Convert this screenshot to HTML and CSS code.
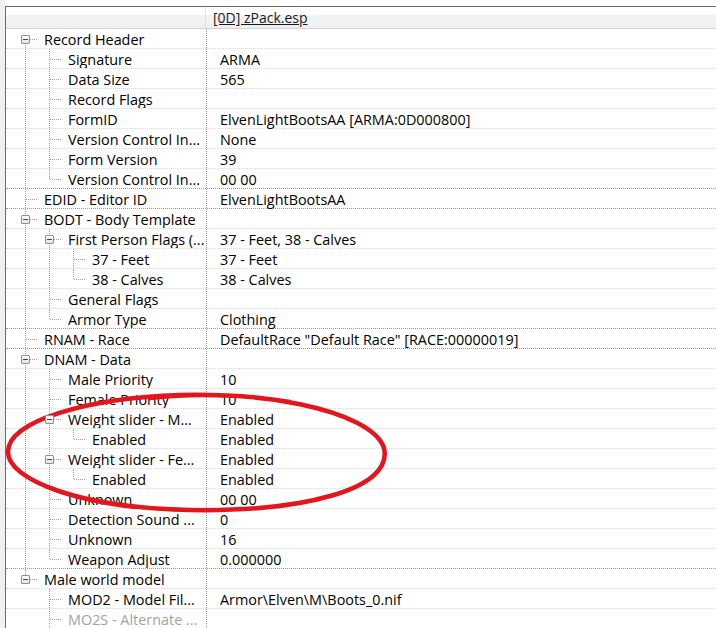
FILE: index.html
```html
<!DOCTYPE html>
<html lang="en">
<head>
    <meta charset="UTF-8">
    <title>zPack.esp - ARMA</title>
    <link rel="stylesheet" href="styles.css">
</head>
<body>
    <div class="frame">
        <div class="view">
            <div class="header">
                <div class="hname"></div>
                <div class="hval"><u>[0D] zPack.esp</u></div>
            </div>

            <div class="row">
                <div class="name"><span class="j first"><i class="box"></i></span><span class="label">Record Header</span></div>
                <div class="val"></div>
            </div>
            <div class="row">
                <div class="name"><span class="g line"></span><span class="j"></span><span class="label">Signature</span></div>
                <div class="val">ARMA</div>
            </div>
            <div class="row">
                <div class="name"><span class="g line"></span><span class="j"></span><span class="label">Data Size</span></div>
                <div class="val">565</div>
            </div>
            <div class="row">
                <div class="name"><span class="g line"></span><span class="j"></span><span class="label">Record Flags</span></div>
                <div class="val"></div>
            </div>
            <div class="row">
                <div class="name"><span class="g line"></span><span class="j"></span><span class="label">FormID</span></div>
                <div class="val">ElvenLightBootsAA [ARMA:0D000800]</div>
            </div>
            <div class="row">
                <div class="name"><span class="g line"></span><span class="j"></span><span class="label">Version Control In...</span></div>
                <div class="val">None</div>
            </div>
            <div class="row">
                <div class="name"><span class="g line"></span><span class="j"></span><span class="label">Form Version</span></div>
                <div class="val">39</div>
            </div>
            <div class="row group-end">
                <div class="name"><span class="g line"></span><span class="j last"></span><span class="label">Version Control In...</span></div>
                <div class="val">00 00</div>
            </div>

            <div class="row group-end">
                <div class="name"><span class="j"></span><span class="label">EDID - Editor ID</span></div>
                <div class="val">ElvenLightBootsAA</div>
            </div>

            <div class="row">
                <div class="name"><span class="j"><i class="box"></i></span><span class="label">BODT - Body Template</span></div>
                <div class="val"></div>
            </div>
            <div class="row">
                <div class="name"><span class="g line"></span><span class="j"><i class="box"></i></span><span class="label">First Person Flags (...</span></div>
                <div class="val">37 - Feet, 38 - Calves</div>
            </div>
            <div class="row">
                <div class="name"><span class="g line"></span><span class="g line"></span><span class="j"></span><span class="label">37 - Feet</span></div>
                <div class="val">37 - Feet</div>
            </div>
            <div class="row">
                <div class="name"><span class="g line"></span><span class="g line"></span><span class="j last"></span><span class="label">38 - Calves</span></div>
                <div class="val">38 - Calves</div>
            </div>
            <div class="row">
                <div class="name"><span class="g line"></span><span class="j"></span><span class="label">General Flags</span></div>
                <div class="val"></div>
            </div>
            <div class="row group-end">
                <div class="name"><span class="g line"></span><span class="j last"></span><span class="label">Armor Type</span></div>
                <div class="val">Clothing</div>
            </div>

            <div class="row group-end">
                <div class="name"><span class="j"></span><span class="label">RNAM - Race</span></div>
                <div class="val">DefaultRace "Default Race" [RACE:00000019]</div>
            </div>

            <div class="row">
                <div class="name"><span class="j"><i class="box"></i></span><span class="label">DNAM - Data</span></div>
                <div class="val"></div>
            </div>
            <div class="row">
                <div class="name"><span class="g line"></span><span class="j"></span><span class="label">Male Priority</span></div>
                <div class="val">10</div>
            </div>
            <div class="row">
                <div class="name"><span class="g line"></span><span class="j"></span><span class="label">Female Priority</span></div>
                <div class="val">10</div>
            </div>
            <div class="row">
                <div class="name"><span class="g line"></span><span class="j"><i class="box"></i></span><span class="label">Weight slider - M...</span></div>
                <div class="val">Enabled</div>
            </div>
            <div class="row">
                <div class="name"><span class="g line"></span><span class="g line"></span><span class="j last"></span><span class="label">Enabled</span></div>
                <div class="val">Enabled</div>
            </div>
            <div class="row">
                <div class="name"><span class="g line"></span><span class="j"><i class="box"></i></span><span class="label">Weight slider - Fe...</span></div>
                <div class="val">Enabled</div>
            </div>
            <div class="row">
                <div class="name"><span class="g line"></span><span class="g line"></span><span class="j last"></span><span class="label">Enabled</span></div>
                <div class="val">Enabled</div>
            </div>
            <div class="row">
                <div class="name"><span class="g line"></span><span class="j"></span><span class="label">Unknown</span></div>
                <div class="val">00 00</div>
            </div>
            <div class="row">
                <div class="name"><span class="g line"></span><span class="j"></span><span class="label">Detection Sound ...</span></div>
                <div class="val">0</div>
            </div>
            <div class="row">
                <div class="name"><span class="g line"></span><span class="j"></span><span class="label">Unknown</span></div>
                <div class="val">16</div>
            </div>
            <div class="row group-end">
                <div class="name"><span class="g line"></span><span class="j last"></span><span class="label">Weapon Adjust</span></div>
                <div class="val">0.000000</div>
            </div>

            <div class="row">
                <div class="name"><span class="j last"><i class="box"></i></span><span class="label">Male world model</span></div>
                <div class="val"></div>
            </div>
            <div class="row">
                <div class="name"><span class="g"></span><span class="j"></span><span class="label">MOD2 - Model Fil...</span></div>
                <div class="val">Armor\Elven\M\Boots_0.nif</div>
            </div>
            <div class="row">
                <div class="name"><span class="g"></span><span class="j"></span><span class="label muted">MO2S - Alternate ...</span></div>
                <div class="val"></div>
            </div>
        </div>
    </div>

    <!-- red marker drawn over the weight slider rows -->
    <svg class="marker" width="716" height="628" viewBox="0 0 716 628">
        <path d="M150 398 C 250 386, 372 410, 384 448 C 394 490, 300 512, 190 510 C 80 508, 8 480, 8 452 C 8 420, 90 398, 180 395 C 230 394, 260 397, 290 402"
              fill="none" stroke="#e3151d" stroke-width="4.5" stroke-linecap="round"/>
    </svg>
</body>
</html>
```

FILE: styles.css
```css
body {
    margin: 0;
    position: relative;
    width: 716px;
    height: 628px;
    overflow: hidden;
    background: #fff;
    font-family: "Open Sans", "Noto Sans", Arial, sans-serif;
    font-size: 14.4px;
    color: #000;
}

.frame {
    padding: 6px 0 0 0;
    height: 622px;
    background: linear-gradient(to right, #f0f0f0 5px, #fff 5px);
}

.view {
    margin-left: 5px;
    height: 100%;
    border-top: 1px solid #6a6a6a;
    border-left: 1px solid #6a6a6a;
    background: #fff;
}

/* column header */
.header {
    display: flex;
    height: 21px;
    border-bottom: 1px solid #d5d5d5;
    background: linear-gradient(#fff 0, #fff 40%, #f2f3f5 40%, #eff0f2 100%);
}
.hname {
    width: 199px;
    border-right: 1px solid #e3e3e3;
}
.hval {
    padding-left: 7px;
    font-size: 14px;
    line-height: 21px;
    color: #1a1a1a;
}

/* tree rows */
.row {
    display: flex;
    height: 19px;
    border-bottom: 1px dotted #d8d8d8;
}
.row.group-end { border-bottom-color: #9a9a9a; }

.name {
    display: flex;
    width: 193px;
    padding-left: 7px;
    border-right: 1px dotted #9a9a9a;
    white-space: nowrap;
    overflow: hidden;
}
.val {
    padding-left: 13px;
    padding-top: 2px;
    line-height: 17px;
    white-space: nowrap;
}
.label {
    margin-left: 7px;
    padding-top: 2px;
    line-height: 17px;
}
.label.muted { color: #a3a3a3; }

.g, .j {
    position: relative;
    flex: none;
    width: 24px;
    height: 19px;
}
.g.line::before,
.j::before {
    content: "";
    position: absolute;
    left: 12px;
    top: 0;
    height: 19px;
    border-left: 1px dotted #a0a0a0;
}
.j.last::before { height: 10px; }
.j.first::before { top: 10px; height: 9px; }
.j::after {
    content: "";
    position: absolute;
    left: 13px;
    top: 10px;
    width: 11px;
    border-top: 1px dotted #a0a0a0;
}

/* expander box */
.box {
    position: absolute;
    z-index: 1;
    left: 8px;
    top: 6px;
    width: 7px;
    height: 7px;
    border: 1px solid #919191;
    border-radius: 1px;
    background: linear-gradient(#fff, #e2e2e2);
}
.box::before {
    content: "";
    position: absolute;
    left: 1px;
    top: 3px;
    width: 5px;
    height: 1px;
    background: #2b4c7e;
}

.marker {
    position: absolute;
    left: 0;
    top: 0;
    pointer-events: none;
}
```
